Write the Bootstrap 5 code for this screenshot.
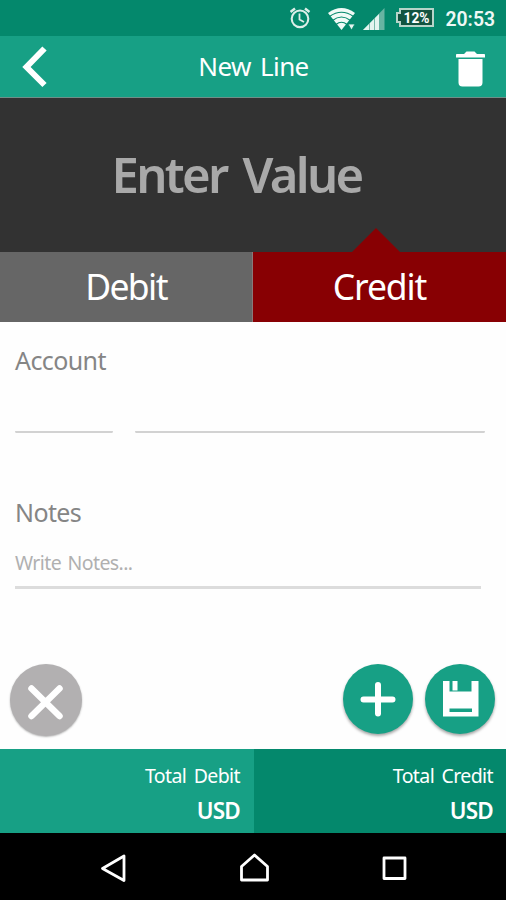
<!DOCTYPE html>
<html lang="en">
<head>
<meta charset="utf-8">
<meta name="viewport" content="width=device-width, initial-scale=1">
<title>New Line</title>
<link href="https://cdn.jsdelivr.net/npm/bootstrap@5.3.0/dist/css/bootstrap.min.css" rel="stylesheet">
<style>
  body { font-family: "Noto Sans", "Open Sans", sans-serif; width: 506px; height: 900px; overflow: hidden; background: #fefefe; }
  svg { display: block; flex: none; }
  .status-strip { height: 36px; background: #04886c; padding-right: 8px; }
  .app-header { height: 62px; background: #17a085; padding: 0 21px 0 22px; border-bottom: 1px solid #6f8f88; }
  .app-title { font-size: 26px; line-height: 36px; padding: 0 0 2px 1px; letter-spacing: -.6px; word-spacing: 3px; }
  .amount { height: 154px; background: #323232; padding: 0 33px 2px 0; }
  .amount-text { font-size: 49px; font-weight: 600; line-height: 60px; color: #a9a9a9; letter-spacing: -2.7px; word-spacing: 6px; }
  .side-tab { height: 70px; font-size: 35.5px; line-height: 69px; color: #fff; letter-spacing: -1.1px; }
  .tab-debit { background: #666; border-right: 1px solid #8a7a7a; letter-spacing: -1.6px; }
  .tab-credit { background: #880003; }
  .pointer { left: 98px; top: -24px; }
  .form-area { height: 427px; padding: 0 15px; }
  .field-label { font-size: 25px; line-height: 34px; color: #858585; letter-spacing: -.6px; }
  .label-account { padding-top: 21px; }
  .account-lines { padding: 53px 6px 0 0; gap: 22px; }
  .underline { height: 3px; border-bottom: 2px solid #d2d2d2; border-radius: 2px; }
  .underline-code { width: 98px; }
  .label-notes { padding-top: 62px; }
  .notes-hint { font-size: 19.5px; line-height: 28px; color: #b0b0b0; padding-top: 20px; letter-spacing: -.6px; word-spacing: 2px; }
  .notes-line { height: 3px; background: #dcdcdc; margin: 9px 10px 0 0; }
  .actions { padding: 75px 0 0; margin: 0 -4px 0 -5.5px; gap: 12px; }
  .round-btn { width: 70px; height: 70px; background: #17a085; box-shadow: 0 2px 3px rgba(0,0,0,.35); }
  .round-cancel { width: 72px; height: 72px; background: #b2b0b1; box-shadow: 0 1px 2px rgba(0,0,0,.3); }
  .btn-pair { gap: 12px; padding-bottom: 2px; }
  .total { height: 84px; padding: 11px 14px 0 0; color: #fff; }
  .total-debit { width: 254px; background: #17a085; }
  .total-credit { width: 252px; background: #04886c; padding-right: 13px; }
  .total-name { font-size: 19.5px; line-height: 31px; letter-spacing: -.6px; word-spacing: 3px; }
  .total-value { font-size: 22.5px; font-weight: 600; line-height: 34px; padding-top: 3px; letter-spacing: -.8px; }
  .nav-strip { height: 67px; background: #000; padding: 2px 98px 0 100px; }
</style>
</head>
<body>
<div class="status-strip d-flex justify-content-end align-items-center">
  <svg width="155" height="36" viewBox="0 0 155 36" fill="none">
    <g stroke="#dceee8" stroke-width="2.1">
      <circle cx="10" cy="18.800" r="8.300"/>
      <path d="M9.500 13.500V19.500L14 22" stroke-width="1.800"/>
      <path d="M0.500 12 5 8.500M15 8.500 19.500 12" stroke-width="2.400"/>
    </g>
    <path d="M38 13Q51.500 3 65 13L51.500 30Z" fill="#f0faf6"/>
    <path d="M39.500 16.500Q51.500 8 63.500 16.500M42.500 20.500Q51.500 13.500 60.500 20.500M46 24.500Q51.500 20 57 24.500" stroke="#04886c" stroke-width="1.200"/>
    <path d="M58 24h7l-3.500 6z" fill="#e5f4ef" stroke="#04886c" stroke-width=".8"/>
    <path d="M73 30 94.500 8V30Z" fill="#67b4a2"/>
    <path d="M73 30 89 14V30Z" fill="#e5f5f0"/>
    <path d="M79.500 23v7M84.500 18v12" stroke="#5dac99" stroke-width=".8"/>
    <path d="M110 9h33v17h-33v-4h-3v-9h3z" fill="#125440" stroke="#b7d4c9" stroke-width="2"/>
    <text x="113.500" y="23" font-family="Roboto, sans-serif" font-size="14.500" font-weight="700" fill="#fff" textLength="26" lengthAdjust="spacingAndGlyphs">12%</text>
  </svg>
  <svg width="53" height="36" viewBox="0 0 53 36"><text x="0.500" y="26" font-family="Roboto, sans-serif" font-size="20.500" font-weight="600" fill="#eef8f5" textLength="49.500" lengthAdjust="spacingAndGlyphs">20:53</text></svg>
</div>
<header class="app-header d-flex align-items-center justify-content-between text-white">
  <svg width="28" height="44" viewBox="0 0 28 44"><path d="M22.500 3.500 4.500 22 22.500 40" fill="none" stroke="#fff" stroke-width="6"/></svg>
  <div class="app-title">New Line</div>
  <svg width="29" height="44" viewBox="0 0 29 44" fill="#fff"><path d="M0 10.500V7.500Q0 7 1 7H8L10.500 4.500H18.500L21 7H28Q29 7 29 7.500V10.500ZM2.500 12H26.500V35.500Q26.500 39.500 22.500 39.500H6.500Q2.500 39.500 2.500 35.500Z" transform="translate(0 2)"/></svg>
</header>
<div class="amount d-flex align-items-center justify-content-center"><div class="amount-text">Enter Value</div></div>
<div class="row g-0 text-center">
  <div class="col-6 side-tab tab-debit">Debit</div>
  <div class="col-6 side-tab tab-credit position-relative">
    <svg class="pointer position-absolute" width="50" height="25" viewBox="0 0 50 25"><path d="M0 25 25 0 50 25Z" fill="#880003"/></svg>
    Credit
  </div>
</div>
<main class="form-area">
  <div class="field-label label-account">Account</div>
  <div class="account-lines d-flex">
    <div class="underline underline-code"></div>
    <div class="underline flex-grow-1"></div>
  </div>
  <div class="field-label label-notes">Notes</div>
  <div class="notes-hint">Write Notes...</div>
  <div class="notes-line"></div>
  <div class="actions d-flex align-items-center">
    <div class="round-cancel rounded-circle me-auto">
      <svg width="72" height="72" viewBox="0 0 72 72"><path d="M21.500 24.500 49.500 52M49.500 24.500 21.500 52" stroke="#fff" stroke-width="6.500" stroke-linecap="round"/></svg>
    </div>
    <div class="btn-pair d-flex">
      <div class="round-btn rounded-circle">
        <svg width="70" height="70" viewBox="0 0 70 70"><path d="M35 21V49.500M20.500 35.500H49.500" stroke="#fff" stroke-width="6" stroke-linecap="round"/></svg>
      </div>
      <div class="round-btn rounded-circle">
        <svg width="70" height="70" viewBox="0 0 70 70"><path d="M18 17H24.500V27.500H46.500V17H53.500V52.500H18Z" fill="#fff"/><path d="M27.500 17h5V26.500h-5z" fill="#fff"/><path d="M24.500 44.500H47V48H24.500Z" fill="#17a085"/></svg>
      </div>
    </div>
  </div>
</main>
<div class="d-flex text-end">
  <div class="total total-debit"><div class="total-name">Total Debit</div><div class="total-value">USD</div></div>
  <div class="total total-credit"><div class="total-name">Total Credit</div><div class="total-value">USD</div></div>
</div>
<nav class="nav-strip d-flex align-items-center justify-content-between">
  <svg width="28" height="34" viewBox="0 0 28 34" fill="none" stroke="#fff" stroke-width="2.800" stroke-linejoin="round"><path d="M24 5V29.500L2.500 17.500Z"/></svg>
  <svg width="30" height="34" viewBox="0 0 30 34" fill="none" stroke="#fff" stroke-width="2.800" stroke-linejoin="round"><path d="M1.500 29V15.500L14.500 4 27.500 15.500V29Z"/></svg>
  <svg width="26" height="34" viewBox="0 0 26 34" fill="none" stroke="#fff" stroke-width="2.800" stroke-linejoin="round"><path d="M2 7H23V27.500H2Z"/></svg>
</nav>
<script src="https://cdn.jsdelivr.net/npm/bootstrap@5.3.0/dist/js/bootstrap.bundle.min.js"></script>
</body>
</html>
